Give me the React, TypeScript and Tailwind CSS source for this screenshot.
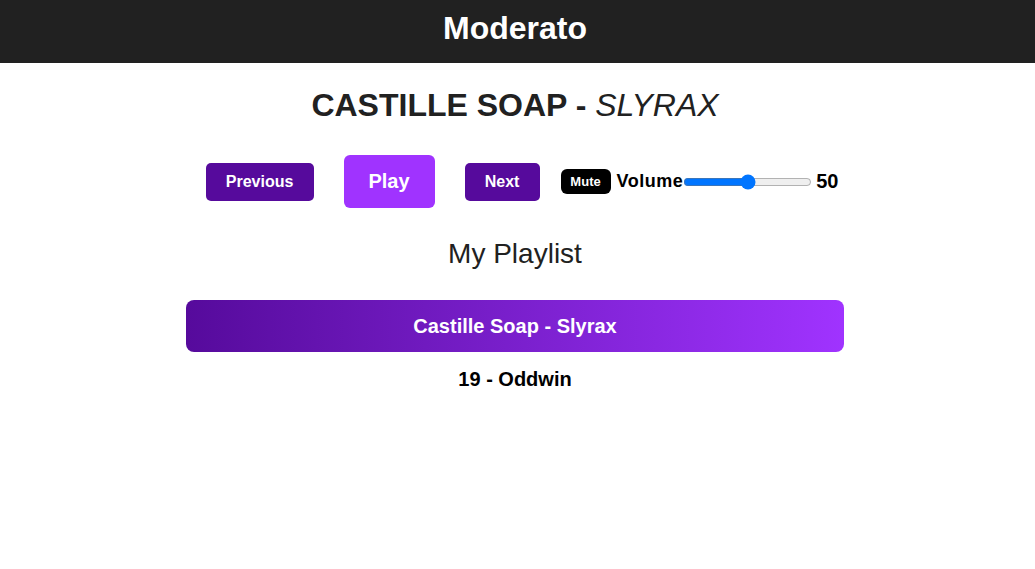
import React, { useState } from "react";

export default function App() {
  const [vol, setVol] = useState(50);
  return (
    <div className="min-h-screen bg-white" style={{ fontFamily: '"Liberation Sans", Arial, sans-serif' }}>
      <header className="h-[63px] bg-[#212121] flex items-center justify-center pr-[5px] pb-[6px]">
        <h1 className="text-[32px] leading-[37px] font-bold text-white">Moderato</h1>
      </header>
      <main className="pr-[5px] flex flex-col items-center">
        <h2 className="mt-[24px] text-[32px] leading-[37px] text-[#212121]">
          <span className="font-bold">CASTILLE SOAP - </span>
          <span className="italic">SLYRAX</span>
        </h2>
        <div className="mt-[31px] ml-[14px] flex items-center">
          <button className="h-[38px] w-[108px] rounded-[5px] bg-[#560a9c] text-white text-[16px] font-bold">
            Previous
          </button>
          <button className="ml-[30px] h-[53px] w-[91px] rounded-[6px] bg-[#a033ff] text-white text-[20px] font-bold leading-[22px] pb-[2px]">
            Play
          </button>
          <button className="ml-[30px] h-[38px] w-[75px] rounded-[5px] bg-[#560a9c] text-white text-[16px] font-bold">
            Next
          </button>
          <button className="ml-[21px] h-[25px] w-[50px] rounded-[6px] bg-black text-white text-[13px] font-bold">
            Mute
          </button>
          <span className="ml-[6px] text-[18px] font-bold text-black leading-[21px] tracking-[0.5px]">Volume</span>
          <input
            type="range"
            min={0}
            max={100}
            value={vol}
            onChange={(e) => setVol(Number(e.target.value))}
            className="w-[129px] m-0"
          />
          <span className="ml-[4px] text-[20px] font-bold text-black leading-[23px]">{vol}</span>
        </div>
        <h3 className="mt-[30px] text-[28px] leading-[32px] text-[#212121]">My Playlist</h3>
        <div className="mt-[30px] w-[658px] h-[52px] rounded-[8px] bg-gradient-to-r from-[#560a9c] to-[#a033ff] flex items-center justify-center">
          <span className="text-white text-[20px] font-bold leading-[23px]">Castille Soap - Slyrax</span>
        </div>
        <div className="mt-[16px] text-[20px] font-bold leading-[23px] text-black">19 - Oddwin</div>
      </main>
    </div>
  );
}
